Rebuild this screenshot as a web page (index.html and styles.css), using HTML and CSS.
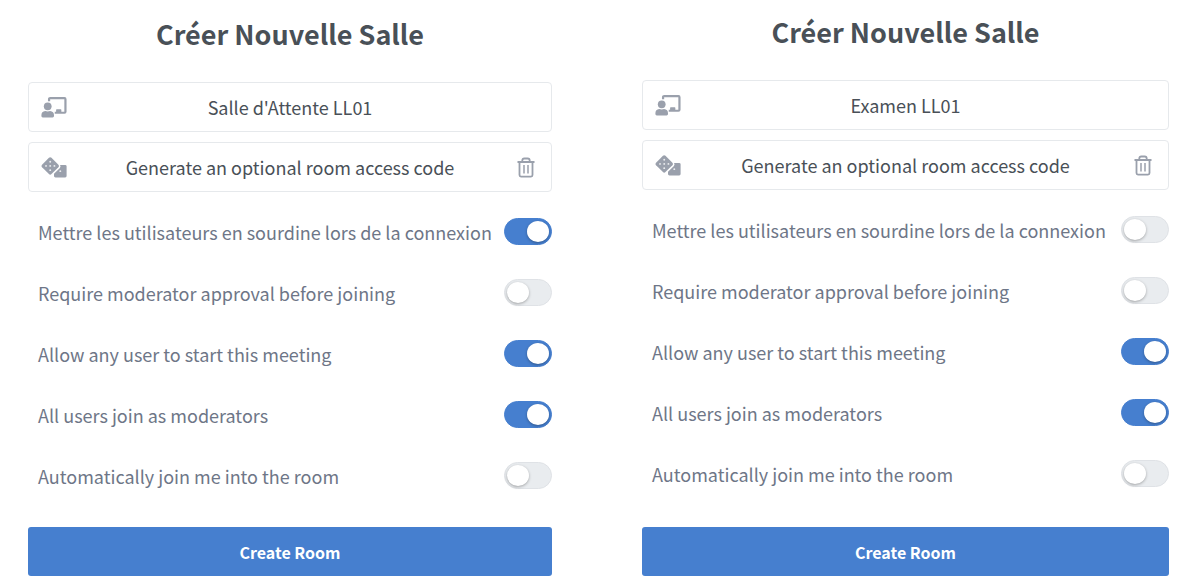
FILE: index.html
```html
<!DOCTYPE html>
<html lang="fr">
  <head>
    <meta charset="utf-8">
    <title>Créer Nouvelle Salle</title>
    <link rel="stylesheet" href="styles.css">
  </head>
  <body>
    <svg class="sprite" aria-hidden="true">
      <symbol id="icon-room" viewBox="0 0 24 20">
        <path d="M7.300 4V2.100Q7.300 1.100 8.400 1.100H22Q22.900 1.100 22.900 2.100V14Q22.900 15 22 15H12.700" fill="none" stroke="currentColor" stroke-width="2.100"/>
        <path d="M14 15V12.300Q14 11.700 14.600 11.700H18.400Q19 11.700 19 12.300V15Z"/>
        <circle cx="6" cy="8.900" r="3.700"/>
        <path d="M3.700 13.300Q6 14.200 8.300 13.300Q12 13.700 12 17.400V18.200Q12 19.500 10.700 19.500H1.300Q0 19.500 0 18.200V17.400Q0 13.700 3.700 13.300Z"/>
      </symbol>
      <symbol id="icon-dice" viewBox="0 0 24 20">
        <path d="M7.200.7Q8.400-.3 9.600.7L16.200 7.300Q17.200 8.500 16.200 9.700L9.600 16.300Q8.400 17.300 7.200 16.300L.6 9.700Q-.4 8.500.6 7.300Z"/>
        <path d="M17.800 7.500H22.600Q24 7.500 24 8.900V18.100Q24 19.500 22.600 19.500H13.400Q12 19.500 12 18.100V16L17.400 10.700Q18.800 9.200 17.800 7.500Z"/>
        <g fill="#fff" fill-opacity="0.800">
          <circle cx="8.400" cy="4.500" r="0.900"/>
          <circle cx="4.400" cy="8.500" r="0.900"/>
          <circle cx="8.400" cy="8.500" r="0.900"/>
          <circle cx="12.400" cy="8.500" r="0.900"/>
          <circle cx="8.400" cy="12.500" r="0.900"/>
          <circle cx="18" cy="13.500" r="0.900"/>
        </g>
      </symbol>
      <symbol id="icon-trash" viewBox="0 0 18 20">
        <g fill="none" stroke="currentColor" stroke-width="1.800">
          <path d="M.5 4.500H17.500M5.300 4.500V3Q5.300 1 7.300 1H10.700Q12.700 1 12.700 3V4.500"/>
          <path d="M2.500 4.500V17.600Q2.500 19.100 4 19.100H14Q15.500 19.100 15.500 17.600V4.500"/>
          <path d="M7 7.500V16M11 7.500V16" stroke-width="1.500"/>
        </g>
      </symbol>
    </svg>

    <main class="rooms">
      <form class="room">
        <h1 class="room-title">Créer Nouvelle Salle</h1>
        <div class="field">
          <svg class="icon"><use href="#icon-room"/></svg>
          <input class="field-text" type="text" value="Salle d'Attente LL01" aria-label="Room name">
        </div>
        <div class="field">
          <button class="icon-button" type="button" aria-label="Generate"><svg class="icon"><use href="#icon-dice"/></svg></button>
          <span class="field-text">Generate an optional room access code</span>
          <button class="icon-button" type="button" aria-label="Reset"><svg class="icon icon-trash"><use href="#icon-trash"/></svg></button>
        </div>
        <div class="options">
          <label class="option">Mettre les utilisateurs en sourdine lors de la connexion <input class="switch" type="checkbox" checked></label>
          <label class="option">Require moderator approval before joining <input class="switch" type="checkbox"></label>
          <label class="option">Allow any user to start this meeting <input class="switch" type="checkbox" checked></label>
          <label class="option">All users join as moderators <input class="switch" type="checkbox" checked></label>
          <label class="option">Automatically join me into the room <input class="switch" type="checkbox"></label>
        </div>
        <button class="submit" type="submit">Create Room</button>
      </form>

      <form class="room room-exam">
        <h1 class="room-title">Créer Nouvelle Salle</h1>
        <div class="field">
          <svg class="icon"><use href="#icon-room"/></svg>
          <input class="field-text" type="text" value="Examen LL01" aria-label="Room name">
        </div>
        <div class="field">
          <button class="icon-button" type="button" aria-label="Generate"><svg class="icon"><use href="#icon-dice"/></svg></button>
          <span class="field-text">Generate an optional room access code</span>
          <button class="icon-button" type="button" aria-label="Reset"><svg class="icon icon-trash"><use href="#icon-trash"/></svg></button>
        </div>
        <div class="options">
          <label class="option">Mettre les utilisateurs en sourdine lors de la connexion <input class="switch" type="checkbox"></label>
          <label class="option">Require moderator approval before joining <input class="switch" type="checkbox"></label>
          <label class="option">Allow any user to start this meeting <input class="switch" type="checkbox" checked></label>
          <label class="option">All users join as moderators <input class="switch" type="checkbox" checked></label>
          <label class="option">Automatically join me into the room <input class="switch" type="checkbox"></label>
        </div>
        <button class="submit" type="submit">Create Room</button>
      </form>
    </main>
  </body>
</html>
```

FILE: styles.css
```css
* {
  box-sizing: border-box;
}

body {
  margin: 0;
  background: #fff;
  color: #495057;
  font-family: "Noto Sans CJK JP", "Noto Sans", sans-serif;
  font-size: 18px;
  line-height: 24px;
}

.sprite {
  display: none;
}

.rooms {
  display: grid;
  grid-template-columns: 524fr 527fr;
  column-gap: 90px;
  padding: 0 31px 11px 28px;
}

.room {
  display: flex;
  flex-direction: column;
  padding-top: 14px;
}

.room-exam {
  padding-top: 12px;
}

.room-title {
  margin: 0 0 28px;
  font-size: 27px;
  font-weight: 700;
  line-height: 40px;
  text-align: center;
}

.field {
  display: grid;
  grid-template-columns: 26px 1fr 26px;
  align-items: center;
  height: 50px;
  margin-bottom: 10px;
  padding: 0 12px;
  border: 1px solid #e6e9ec;
  border-radius: 4px;
}

.field-text {
  width: 100%;
  padding: 0;
  border: 0;
  background: none;
  color: #495057;
  font: inherit;
  text-align: center;
}

.icon {
  display: block;
  width: 26px;
  height: 21px;
  color: #9aa0ac;
  fill: currentColor;
}

.icon-trash {
  width: 18px;
}

.icon-button {
  display: flex;
  justify-content: center;
  padding: 0;
  border: 0;
  background: none;
  cursor: pointer;
}

.options {
  margin: -1px 0 21px;
}

.option {
  display: flex;
  align-items: center;
  justify-content: space-between;
  height: 61px;
  padding-left: 10px;
  color: #6e7687;
}

.switch {
  appearance: none;
  flex: none;
  width: 48px;
  height: 27px;
  margin: 0;
  padding: 2px;
  border: 1px solid #dfe2e6;
  border-radius: 14px;
  background: #e9ecef;
  cursor: pointer;
}

.switch::before {
  content: "";
  display: block;
  width: 22px;
  height: 21px;
  border-radius: 50%;
  background: #fff;
  box-shadow: 0 1px 3px rgba(0, 0, 0, 0.3);
}

.switch:checked {
  border-color: #467fcf;
  background: #467fcf;
}

.switch:checked::before {
  margin-left: auto;
}

.submit {
  height: 49px;
  margin-top: auto;
  border: 0;
  border-radius: 3px;
  background: #467fcf;
  color: #fff;
  font: inherit;
  font-size: 16px;
  font-weight: 700;
  cursor: pointer;
}
```
